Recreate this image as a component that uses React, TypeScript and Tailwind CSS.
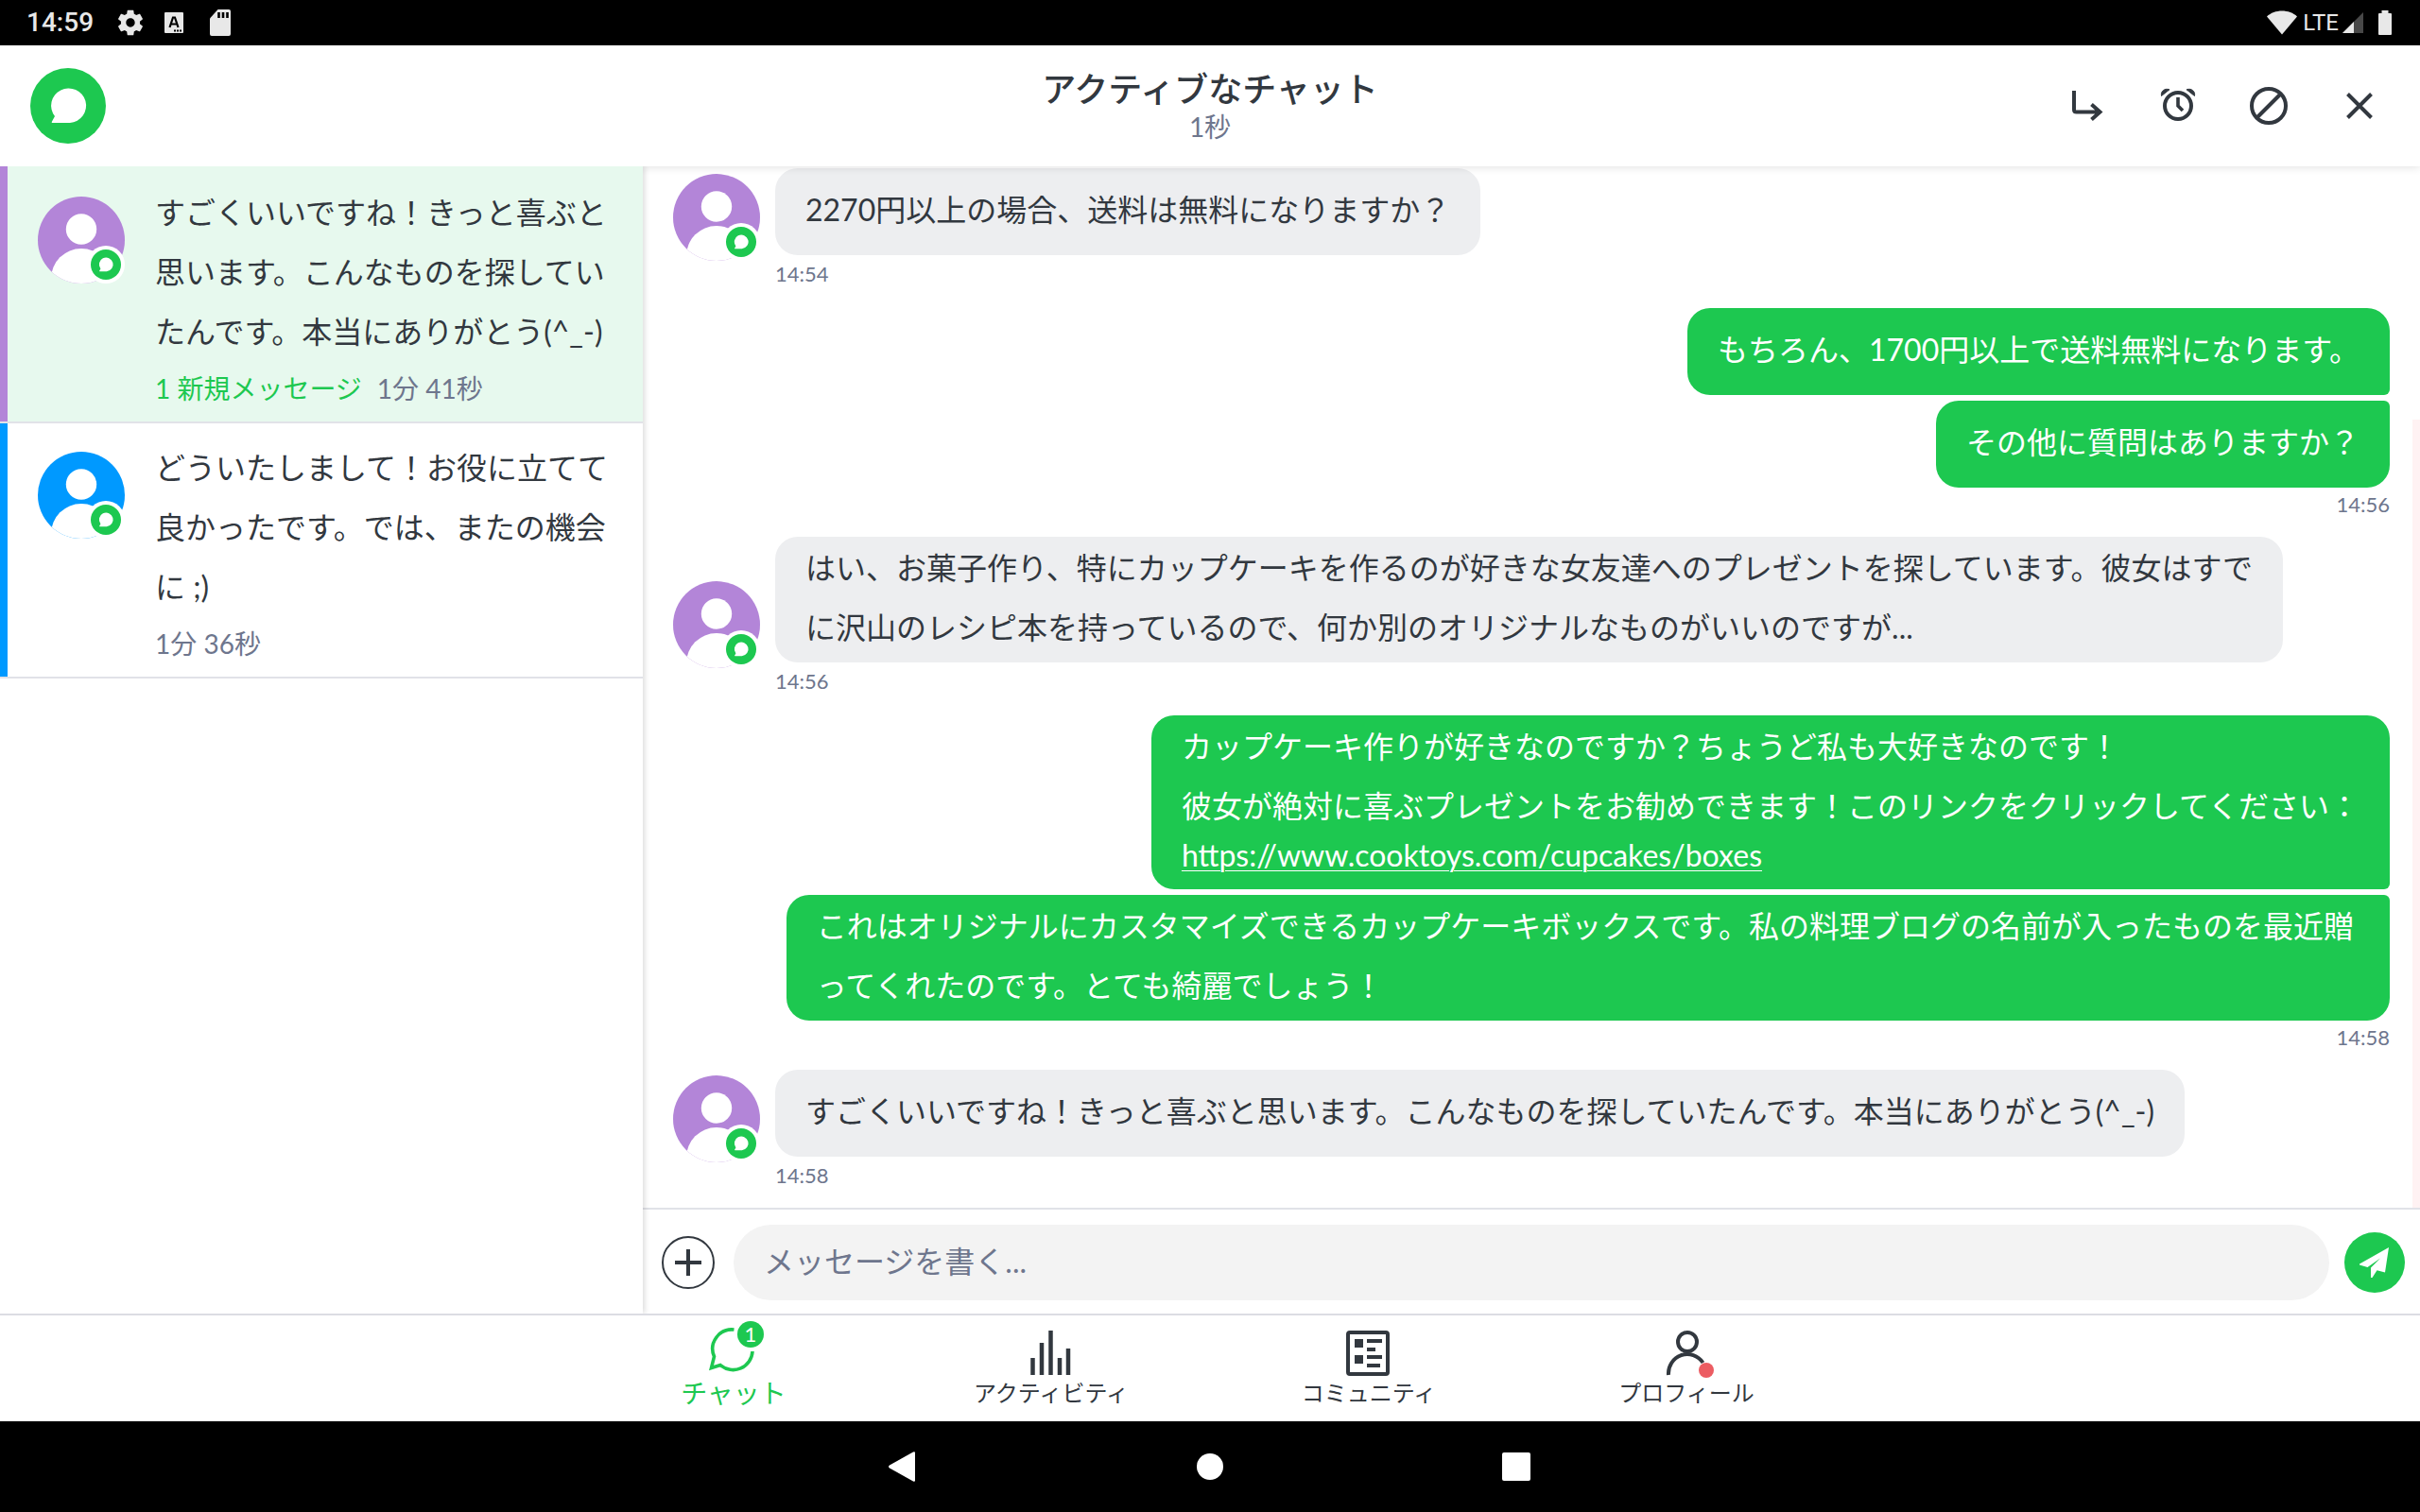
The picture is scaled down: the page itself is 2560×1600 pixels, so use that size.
import type { ReactNode } from "react";

const BUBBLE = "M26 51A18.5 18.3 0 1 1 42 58H24Q22 58 23 56.500Z";

function LogoMark({ className }: { className: string }) {
  return (
    <svg viewBox="0 0 80 80" className={className} aria-hidden="true">
      <circle cx="40" cy="40" r="40" fill="#1dc850" />
      <path d={BUBBLE} fill="#fff" />
    </svg>
  );
}

function Avatar({ color, id }: { color: string; id: string }) {
  return (
    <svg viewBox="0 0 92 92" className="block size-[92px] shrink-0 overflow-visible" aria-hidden="true">
      <clipPath id={id}>
        <circle cx="46" cy="46" r="46" />
      </clipPath>
      <g clipPath={`url(#${id})`}>
        <rect width="92" height="92" fill={color} />
        <circle cx="46" cy="34.500" r="16.200" fill="#fff" />
        <circle cx="46" cy="87" r="32" fill="#fff" />
      </g>
      <circle cx="72" cy="72" r="20" fill="#fff" />
      <circle cx="72" cy="72" r="16" fill="#1dc850" />
      <g transform="translate(56 56) scale(0.4)">
        <path d={BUBBLE} fill="#fff" />
      </g>
    </svg>
  );
}

function StatusBar() {
  return (
    <div className="flex h-12 shrink-0 items-center justify-between bg-black pr-[30px] pl-7 text-[#e8e8e8]">
      <div className="flex items-center">
        <span className="font-[Roboto] text-[28px] leading-8 font-medium">14:59</span>
        <svg viewBox="0 0 24 24" className="ml-[23px] size-8" fill="currentColor" aria-hidden="true">
          <path d="M19.430 12.980c.040-.320.070-.640.070-.980s-.030-.660-.070-.980l2.110-1.650c.190-.150.240-.420.120-.640l-2-3.460c-.120-.220-.390-.300-.610-.220l-2.490 1c-.520-.400-1.080-.730-1.690-.980l-.380-2.650A.488.488 0 0 0 14 2h-4c-.250 0-.460.180-.490.420l-.380 2.650c-.610.250-1.170.590-1.690.980l-2.490-1c-.230-.090-.490 0-.610.220l-2 3.460c-.130.220-.070.490.120.640l2.110 1.650c-.040.320-.070.650-.070.980s.030.660.070.980l-2.110 1.650c-.190.150-.240.420-.120.640l2 3.460c.120.220.390.300.610.220l2.490-1c.520.400 1.080.730 1.690.980l.380 2.650c.030.240.240.420.490.420h4c.250 0 .460-.180.490-.420l.380-2.650c.610-.250 1.170-.590 1.690-.980l2.490 1c.230.090.490 0 .610-.220l2-3.460c.120-.220.070-.490-.120-.640l-2.110-1.650ZM12 15.500c-1.930 0-3.500-1.570-3.500-3.500s1.570-3.500 3.500-3.500 3.500 1.570 3.500 3.500-1.570 3.500-3.500 3.500Z" />
        </svg>
        <svg viewBox="0 0 20 22" className="ml-5 h-[22px] w-5" aria-hidden="true">
          <rect width="20" height="22" rx="1" fill="currentColor" />
          <path d="M5.500 16 9 5.500h2L14.500 16M7 12.500h6" fill="none" stroke="#000" strokeWidth="2.200" />
          <path d="M10 19.500h2m1 0h2m1 0h2" stroke="#000" strokeWidth="2" />
        </svg>
        <svg viewBox="0 0 22 28" className="ml-7 h-7 w-[22px]" aria-hidden="true">
          <path d="M8.500 0H20a2 2 0 0 1 2 2v24a2 2 0 0 1-2 2H2a2 2 0 0 1-2-2V9.500Z" fill="currentColor" />
          <path d="M9.500 3v6M14 3v6M18.500 3v6" stroke="#000" strokeWidth="2.600" />
        </svg>
      </div>
      <div className="flex items-center">
        <svg viewBox="0 0 32 26" className="h-[26px] w-8" fill="currentColor" aria-hidden="true">
          <path d="M16 25.500 0 6.500C4 2.500 10 .500 16 .500s12 2 16 6Z" />
        </svg>
        <span className="ml-1.5 font-[Roboto] text-[24px] leading-8">LTE</span>
        <svg viewBox="0 0 22 22" className="ml-1 size-[22px]" aria-hidden="true">
          <path d="M22 0v22H0Z" fill="#484848" />
          <path d="M12 10v12H0Z" fill="currentColor" />
        </svg>
        <svg viewBox="0 0 14 26" className="ml-4 h-[26px] w-3.5" fill="currentColor" aria-hidden="true">
          <path d="M3.500 0h7v3H13a1 1 0 0 1 1 1v21a1 1 0 0 1-1 1H1a1 1 0 0 1-1-1V4a1 1 0 0 1 1-1h2.500Z" />
        </svg>
      </div>
    </div>
  );
}

function HeaderButton({ label, children }: { label: string; children: ReactNode }) {
  return (
    <button type="button" aria-label={label} className="flex size-24 items-center justify-center">
      <svg viewBox="0 0 48 48" className="size-12" fill="none" stroke="#32383f" strokeWidth="4" aria-hidden="true">
        {children}
      </svg>
    </button>
  );
}

function Header() {
  return (
    <header className="relative z-10 grid h-32 shrink-0 grid-cols-[1fr_auto_1fr] items-center bg-white pr-4 pl-8 shadow-[0_2px_8px_rgba(0,0,0,0.1)]">
      <LogoMark className="size-20" />
      <div className="pr-4 text-center">
        <h1 className="text-[36px] leading-[44px] font-medium">アクティブなチャット</h1>
        <p className="text-[28px] leading-9 text-[#6e768d]">1秒</p>
      </div>
      <div className="flex justify-end">
        <HeaderButton label="転送">
          <path d="M10 8v20q0 2.500 2.500 2.500H38M28.500 22.500l9 8-9 8" />
        </HeaderButton>
        <HeaderButton label="スヌーズ">
          <circle cx="24" cy="24" r="14" />
          <path d="M24 15v9l5 5" strokeWidth="3.600" />
          <path d="M6.500 13.500C5.500 8.500 10 5 15 6.800ZM41.500 13.500C42.500 8.500 38 5 33 6.800Z" fill="#32383f" strokeWidth="1" />
        </HeaderButton>
        <HeaderButton label="禁止">
          <circle cx="24" cy="24" r="18" />
          <path d="M11.500 36.500l25-25" />
        </HeaderButton>
        <HeaderButton label="閉じる">
          <path d="M11.500 11.500l25 25m0-25l-25 25" />
        </HeaderButton>
      </div>
    </header>
  );
}

function Sidebar() {
  return (
    <aside className="relative z-20 w-[680px] shrink-0 bg-white shadow-[2px_0_6px_rgba(0,0,0,0.14)] [clip-path:inset(0_-12px_0_0)]">
      <ul>
        <li className="border-b-2 border-[#e1e2e8]">
          <button
            type="button"
            className="flex w-full items-start gap-8 border-l-8 border-[#b385d8] bg-[#e7f9ee] pt-8 pb-[5px] pl-8 text-left"
          >
            <Avatar color="#b385d8" id="list-a" />
            <span className="-mt-[15px] block">
              <span className="block text-[32px] leading-[63px]">
                すごくいいですね！きっと喜ぶと
                <br />
                思います。こんなものを探してい
                <br />
                たんです。本当にありがとう(^_-)
              </span>
              <span className="flex gap-4 text-[28px] leading-[59px]">
                <span className="text-[#1dc850]">1 新規メッセージ</span>
                <span className="text-[#6e768d]">1分 41秒</span>
              </span>
            </span>
          </button>
        </li>
        <li className="border-b-2 border-[#e1e2e8]">
          <button
            type="button"
            className="flex w-full items-start gap-8 border-l-8 border-[#0099ff] bg-white pt-[30px] pb-[5px] pl-8 text-left"
          >
            <Avatar color="#0099ff" id="list-b" />
            <span className="-mt-[15px] block">
              <span className="block text-[32px] leading-[63px]">
                どういたしまして！お役に立てて
                <br />
                良かったです。では、またの機会
                <br />に ;)
              </span>
              <span className="block text-[28px] leading-[59px] text-[#6e768d]">1分 36秒</span>
            </span>
          </button>
        </li>
      </ul>
    </aside>
  );
}

function Incoming({ id, time, single, children }: { id: string; time: string; single?: boolean; children: ReactNode }) {
  return (
    <div>
      <div className="flex items-end gap-4">
        <div className="-mb-1.5">
          <Avatar color="#b385d8" id={id} />
        </div>
        <div
          className={`rounded-3xl bg-[#edeef0] px-8 text-[32px] leading-[63px] ${single ? "pt-3 pb-[17px]" : "pt-px pb-1.5"}`}
        >
          {children}
        </div>
      </div>
      <time className="mb-4 ml-[108px] block text-[22px] leading-10 text-[#6e768d]">{time}</time>
    </div>
  );
}

function Outgoing({ time, children }: { time: string; children: ReactNode }) {
  return (
    <div className="flex flex-col items-end gap-1.5 text-[32px] leading-[63px] text-white">
      {children}
      <time className="-mt-1.5 mb-4 block text-[22px] leading-9 text-[#6e768d]">{time}</time>
    </div>
  );
}

function Composer() {
  return (
    <form
      className="flex h-28 shrink-0 items-center border-t-2 border-[#e1e2e8] pt-0.5 pr-4 pl-5"
      onSubmit={(e) => e.preventDefault()}
    >
      <button type="button" aria-label="追加" className="shrink-0">
        <svg viewBox="0 0 56 56" className="size-14" fill="none" stroke="#32383f" aria-hidden="true">
          <circle cx="28" cy="28" r="27" strokeWidth="2" />
          <path d="M28 14v28M14 28h28" strokeWidth="4" />
        </svg>
      </button>
      <input
        type="text"
        aria-label="メッセージ"
        placeholder="メッセージを書く..."
        className="mr-4 ml-5 h-20 min-w-0 flex-1 rounded-full bg-[#f3f3f3] px-8 pb-1 text-[32px] outline-none placeholder:text-[#6e768d]"
      />
      <button type="submit" aria-label="送信" className="shrink-0">
        <svg viewBox="0 0 64 64" className="size-16" aria-hidden="true">
          <circle cx="32" cy="32" r="32" fill="#1dc850" />
          <path d="M47 16 43 42.500 34.500 40.200 29.500 48H28V37.500L38 27.500 24.500 37 16 34.500V33.500Z" fill="#fff" />
        </svg>
      </button>
    </form>
  );
}

function Tab({ label, children, active }: { label: string; children: ReactNode; active?: boolean }) {
  return (
    <button
      type="button"
      className={`flex w-[336px] flex-col items-center pt-2 ${active ? "text-[28px] text-[#1dc850]" : "text-[24px] text-[#32383f]"}`}
    >
      <svg viewBox="0 0 64 60" className="h-[60px] w-16" fill="none" stroke="currentColor" strokeWidth="4" aria-hidden="true">
        {children}
      </svg>
      <span className="leading-7">{label}</span>
    </button>
  );
}

function TabBar() {
  return (
    <nav className="relative z-30 flex h-[114px] shrink-0 justify-center border-t-2 border-[#dcdde3] bg-white">
      <div className="relative">
        <Tab label="チャット" active>
          <path d="M32.500 7A20.500 20.500 0 0 0 11.500 35.500L8.500 47.500 18 44.500A20.500 20.500 0 0 0 52 30" strokeWidth="3.600" />
        </Tab>
        <span className="absolute top-1.5 left-[172px] flex size-7 items-center justify-center rounded-full bg-[#1dc850] text-[22px] leading-7 text-white">
          1
        </span>
      </div>
      <Tab label="アクティビティ">
        <path d="M12.500 55V37M22 55V21M31.500 55V8M41 55V37M50 55V27" strokeWidth="4.500" />
      </Tab>
      <Tab label="コミュニティ">
        <rect x="10" y="10" width="42" height="44" rx="2" />
        <path d="M17 17h9v9h-9ZM17 34h9v9h-9ZM30 17h16v4H30ZM30 26h9v4h-9ZM30 34h16v4H30ZM30 43h14v4H30Z" fill="currentColor" stroke="none" />
      </Tab>
      <Tab label="プロフィール">
        <circle cx="33" cy="20" r="10" />
        <path d="M13 55A20 20.500 0 0 1 49.500 42" />
        <circle cx="53" cy="50" r="8" fill="#ec5c62" stroke="none" />
      </Tab>
    </nav>
  );
}

function SystemBar() {
  return (
    <div className="flex h-24 shrink-0 items-center justify-center gap-[228px] bg-black">
      <button type="button" aria-label="戻る" className="flex w-24 justify-center">
        <svg viewBox="0 0 32 32" className="size-8" fill="#fff" aria-hidden="true">
          <path d="M26 .500Q28 -.500 28 1.500V30.500Q28 32.500 26 31.500L1 17.500Q-1 16 1 14.500Z" />
        </svg>
      </button>
      <button type="button" aria-label="ホーム" className="flex w-24 justify-center">
        <span className="size-7 rounded-full bg-white" />
      </button>
      <button type="button" aria-label="履歴" className="flex w-24 justify-center">
        <span className="size-[30px] rounded-xs bg-white" />
      </button>
    </div>
  );
}

export default function App() {
  return (
    <div
      lang="ja"
      className="flex h-screen flex-col overflow-hidden bg-white font-[Lato,'Noto_Sans_CJK_JP',sans-serif] text-[#32383f]"
    >
      <StatusBar />
      <Header />
      <div className="flex min-h-0 flex-1">
        <Sidebar />
        <main className="flex min-w-0 flex-1 flex-col">
          <div className="relative min-h-0 flex-1 overflow-hidden pt-0.5 pr-8 pl-8">
            <Incoming id="chat-a" time="14:54" single>
              2270円以上の場合、送料は無料になりますか？
            </Incoming>
            <Outgoing time="14:56">
              <p className="rounded-3xl rounded-br-md bg-[#1dc850] px-8 pt-3 pb-[17px]">
                もちろん、1700円以上で送料無料になります。
              </p>
              <p className="rounded-3xl rounded-tr-md bg-[#1dc850] px-8 pt-3 pb-[17px]">その他に質問はありますか？</p>
            </Outgoing>
            <Incoming id="chat-b" time="14:56">
              はい、お菓子作り、特にカップケーキを作るのが好きな女友達へのプレゼントを探しています。彼女はすで
              <br />
              に沢山のレシピ本を持っているので、何か別のオリジナルなものがいいのですが...
            </Incoming>
            <Outgoing time="14:58">
              <div className="rounded-3xl rounded-br-md bg-[#1dc850] px-8 pt-px pb-[15px]">
                カップケーキ作りが好きなのですか？ちょうど私も大好きなのです！
                <br />
                彼女が絶対に喜ぶプレゼントをお勧めできます！このリンクをクリックしてください：
                <a
                  href="https://www.cooktoys.com/cupcakes/boxes"
                  className="block leading-[42px] underline decoration-1 underline-offset-4"
                >
                  https://www.cooktoys.com/cupcakes/boxes
                </a>
              </div>
              <p className="rounded-3xl rounded-tr-md bg-[#1dc850] pt-px pr-[38px] pb-1.5 pl-8">
                これはオリジナルにカスタマイズできるカップケーキボックスです。私の料理ブログの名前が入ったものを最近贈
                <br />
                ってくれたのです。とても綺麗でしょう！
              </p>
            </Outgoing>
            <Incoming id="chat-c" time="14:58" single>
              すごくいいですね！きっと喜ぶと思います。こんなものを探していたんです。本当にありがとう(^_-)
            </Incoming>
            <div className="absolute right-0 bottom-0 h-[834px] w-2 bg-[#fff2f3]" />
          </div>
          <Composer />
        </main>
      </div>
      <TabBar />
      <SystemBar />
    </div>
  );
}
